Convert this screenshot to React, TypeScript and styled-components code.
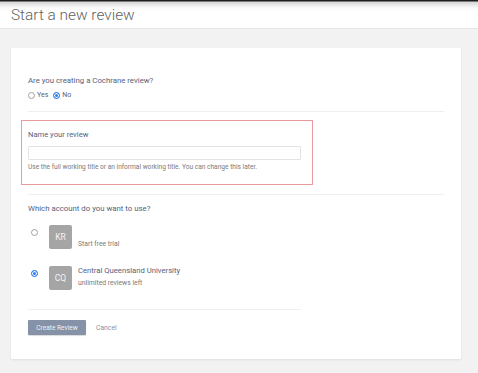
import React, { useState } from "react"
import styled, { createGlobalStyle } from "styled-components"

const GlobalStyle = createGlobalStyle`
  html, body {
    margin: 0;
    padding: 0;
    background: #f2f2f2;
    font-family: Roboto, "Liberation Sans", Arial, sans-serif;
  }
`

const Page = styled.div`
  width: 478px;
  height: 373px;
  overflow: hidden;
  background: #f2f2f2;
`

const Header = styled.header`
  height: 28px;
  background: linear-gradient(#1e1e1e 0, #1e1e1e 1px, #d6d6d6 2px, #fbfbfb 8px, #ffffff 12px);
  border-bottom: 1px solid #e6e6e6;
  padding-left: 11px;
  display: flex;
  align-items: center;
`

const Title = styled.h1`
  margin: 2px 0 0;
  font-size: 15.4px;
  font-weight: 300;
  color: #5f5f5f;
`

const Card = styled.main`
  margin: 19px 17px 0 11px;
  height: 311px;
  background: #fff;
  box-shadow: 0 1px 2px rgba(0, 0, 0, 0.08);
  padding: 27px 17px 0 17px;
  box-sizing: border-box;
`

const Question = styled.div<{ $top?: number }>`
  font-size: 7.8px;
  color: #56627c;
  line-height: 12px;
  margin-top: ${(p) => p.$top ?? 0}px;
`

const RadioRow = styled.div`
  display: flex;
  align-items: center;
  gap: 5px;
  margin-top: 4px;
  margin-bottom: 12px;
  font-size: 7px;
  color: #56627c;
`

const RadioLabel = styled.label`
  display: flex;
  align-items: center;
  gap: 2px;
`

const Dot = styled.span<{ $on?: boolean }>`
  display: block;
  width: 7px;
  height: 7px;
  border-radius: 50%;
  box-sizing: border-box;
  border: 1px solid ${(p) => (p.$on ? "#2a7ef0" : "#a0a0a0")};
  background: ${(p) => (p.$on ? "#2a7ef0" : "#fff")};
  box-shadow: ${(p) => (p.$on ? "inset 0 0 0 1px #fff" : "none")};
`

const Divider = styled.hr<{ $w?: number }>`
  border: none;
  border-top: 1px solid #efefef;
  margin: 0;
  width: ${(p) => (p.$w ? `${p.$w}px` : "100%")};
`

const NameBox = styled.section`
  margin: 8px 0 9px -7px;
  width: 292px;
  height: 65px;
  box-sizing: border-box;
  border: 1px solid #ec9a9e;
  padding: 9px 0 0 6px;
`

const Label = styled.div`
  font-size: 7.6px;
  color: #56627c;
  line-height: 10px;
`

const Input = styled.input`
  display: block;
  margin-top: 6px;
  width: 273px;
  height: 14px;
  box-sizing: border-box;
  border: 1px solid #e3e3e3;
  border-radius: 1px;
  background: #fff;
  outline: none;
`

const Help = styled.div`
  margin-top: 3px;
  font-size: 6.6px;
  color: #7a7a7a;
`

const Accounts = styled.div`
  margin-top: 10px;
  display: flex;
  flex-direction: column;
  gap: 17px;
`

const Account = styled.div`
  display: flex;
  align-items: flex-start;
  height: 24px;
`

const DotCol = styled.div`
  width: 21px;
  padding: 4px 0 0 3px;
  box-sizing: border-box;
`

const Avatar = styled.div`
  width: 23px;
  height: 24px;
  border-radius: 2px;
  background: #a5a5a5;
  color: #f4f4f4;
  font-size: 8.5px;
  display: flex;
  align-items: center;
  justify-content: center;
`

const AccountInfo = styled.div<{ $top: number }>`
  margin-left: 6px;
  padding-top: ${(p) => p.$top}px;
`

const AccountName = styled.div`
  font-size: 7.7px;
  color: #56627c;
  line-height: 10px;
`

const AccountNote = styled.div`
  font-size: 6.8px;
  color: #7a7a7a;
  margin-top: 3px;
`

const Actions = styled.div`
  margin-top: 10px;
  display: flex;
  align-items: center;
  gap: 10px;
`

const PrimaryButton = styled.button`
  width: 58px;
  height: 15px;
  border: none;
  border-radius: 1px;
  background: #8592a8;
  color: #eef1f5;
  font-family: inherit;
  font-size: 6.6px;
  padding: 0;
  box-shadow: 0 1px 1px rgba(0, 0, 0, 0.15);
`

const TextButton = styled.button`
  border: none;
  background: none;
  padding: 0;
  font-family: inherit;
  font-size: 6.8px;
  color: #8993a8;
`

const accounts = [
  { initials: "KR", name: "", note: "Start free trial" },
  { initials: "CQ", name: "Central Queensland University", note: "unlimited reviews left" },
]

export default function App() {
  const [cochrane, setCochrane] = useState(false)
  const [account, setAccount] = useState(1)

  return (
    <Page>
      <GlobalStyle />
      <Header>
        <Title>Start a new review</Title>
      </Header>
      <Card>
        <Question>Are you creating a Cochrane review?</Question>
        <RadioRow>
          <RadioLabel onClick={() => setCochrane(true)}>
            <Dot $on={cochrane} /> Yes
          </RadioLabel>
          <RadioLabel onClick={() => setCochrane(false)}>
            <Dot $on={!cochrane} /> No
          </RadioLabel>
        </RadioRow>
        <Divider />
        <NameBox>
          <Label>Name your review</Label>
          <Input />
          <Help>Use the full working title or an informal working title. You can change this later.</Help>
        </NameBox>
        <Divider />
        <Question $top={8}>Which account do you want to use?</Question>
        <Accounts>
          {accounts.map((a, i) => (
            <Account key={a.initials} onClick={() => setAccount(i)}>
              <DotCol>
                <Dot $on={account === i} />
              </DotCol>
              <Avatar>{a.initials}</Avatar>
              <AccountInfo $top={a.name ? 0 : 12}>
                {a.name && <AccountName>{a.name}</AccountName>}
                <AccountNote>{a.note}</AccountNote>
              </AccountInfo>
            </Account>
          ))}
        </Accounts>
        <div style={{ height: 19 }} />
        <Divider $w={273} />
        <Actions>
          <PrimaryButton>Create Review</PrimaryButton>
          <TextButton>Cancel</TextButton>
        </Actions>
      </Card>
    </Page>
  )
}
